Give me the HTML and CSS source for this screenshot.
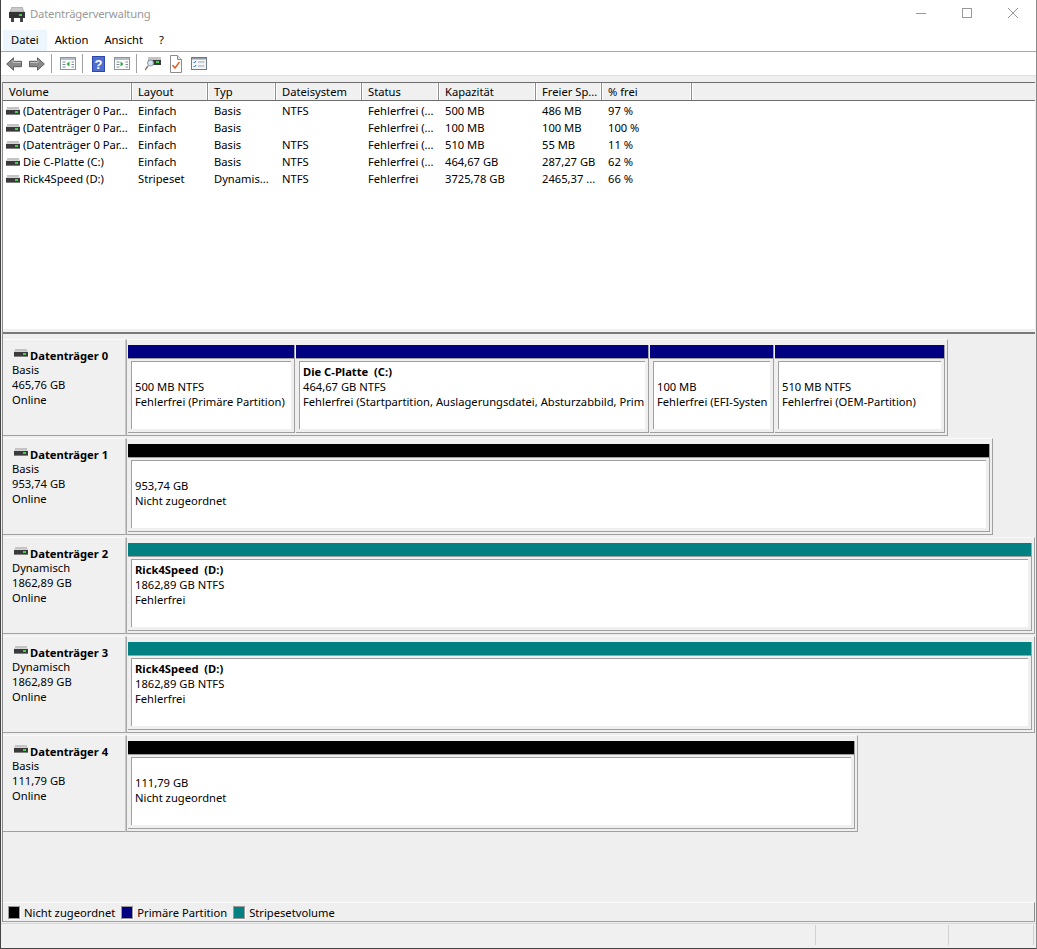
FILE: index.html
```html
<!DOCTYPE html>
<html lang="de">
<head>
<meta charset="utf-8">
<title>Datenträgerverwaltung</title>
<link rel="stylesheet" href="styles.css">
</head>
<body>
<svg class="defs" width="0" height="0">
  <symbol id="hdd" viewBox="0 0 14 8">
    <rect x="1" y="0" width="12" height="3" fill="#c4c4c4"/>
    <rect x="0" y="2" width="14" height="1" fill="#d4d4d4"/>
    <rect x="0" y="3" width="14" height="4" fill="#3a3a3a"/>
    <rect x="0" y="7" width="14" height="1" fill="#808080"/>
    <rect x="9" y="4" width="3" height="2" fill="#3fd24a"/>
  </symbol>
</svg>
<div class="window">
  <header class="titlebar">
    <svg class="appicon" width="16" height="15" viewBox="0 0 16 15">
      <path d="M3 0h10l2 5H1z" fill="#c9c9c9" stroke="#777" stroke-width=".5"/>
      <rect x="0" y="5" width="16" height="6" fill="#333"/>
      <rect x="10" y="7" width="3" height="2" fill="#3fd24a"/>
      <rect x="2" y="11" width="3" height="4" fill="#444"/>
      <rect x="11" y="11" width="3" height="4" fill="#444"/>
    </svg>
    <span class="apptitle">Datenträgerverwaltung</span>
    <div class="caption">
      <svg class="capbtn" width="46" height="30" viewBox="0 0 46 30"><path d="M18 13.5h10" stroke="#999" stroke-width="1"/></svg>
      <svg class="capbtn" width="46" height="30" viewBox="0 0 46 30"><rect x="18.5" y="8.5" width="9" height="9" fill="none" stroke="#999"/></svg>
      <svg class="capbtn" width="46" height="30" viewBox="0 0 46 30"><path d="M18 8l10 10M28 8L18 18" stroke="#999" stroke-width="1" fill="none"/></svg>
    </div>
  </header>
  <nav class="menubar">
    <span class="menu menu-active">Datei</span>
    <span class="menu">Aktion</span>
    <span class="menu">Ansicht</span>
    <span class="menu">?</span>
  </nav>
  <div class="toolbar">
    <svg class="tool tool-arrow" width="16" height="14" viewBox="0 0 16 14"><path d="M7.500.8L.7 7l6.800 6.200V9.700h8V4.300h-8z" fill="#8a8a8a" stroke="#5e5e5e"/><path d="M7 3v2.500h8" fill="none" stroke="#c2c2c2"/></svg>
    <svg class="tool tool-arrow2" width="16" height="14" viewBox="0 0 16 14"><path d="M8.500.8L15.300 7l-6.800 6.200V9.700h-8V4.300h8z" fill="#8a8a8a" stroke="#5e5e5e"/><path d="M1 5.500h8V3" fill="none" stroke="#c2c2c2"/></svg>
    <i class="tsep tsep-1"></i>
    <svg class="tool tool-panel" width="16" height="13" viewBox="0 0 16 13"><rect x=".5" y=".5" width="15" height="12" fill="#fff" stroke="#8b95a0"/><rect x="1" y="1" width="14" height="2" fill="#b4bdc7"/><path d="M2.500 5h3M2.500 7.500h3M2.500 10h3M11.500 5h2.500M11.500 7.500h2.500M11.500 10h2.500" stroke="#7d8996"/><path d="M9.500 4.500v5L6.500 7z" fill="#2fa83a"/></svg>
    <i class="tsep tsep-2"></i>
    <svg class="tool tool-help" width="13" height="16" viewBox="0 0 13 16"><rect width="13" height="16" fill="#2d46a8"/><rect x="1" y="1" width="11" height="14" fill="#4e6fd0"/><text class="helpq" x="6.500" y="13">?</text></svg>
    <svg class="tool tool-panel2" width="16" height="13" viewBox="0 0 16 13"><rect x=".5" y=".5" width="15" height="12" fill="#fff" stroke="#8b95a0"/><rect x="1" y="1" width="14" height="2" fill="#b4bdc7"/><path d="M2.500 5h3M2.500 7.500h3M2.500 10h3M11.500 5h2.500M11.500 7.500h2.500M11.500 10h2.500" stroke="#7d8996"/><path d="M6.500 4.500v5L9.500 7z" fill="#2fa83a"/></svg>
    <i class="tsep tsep-3"></i>
    <svg class="tool tool-scan" width="16" height="15" viewBox="0 0 16 15"><rect x="3" y="1" width="13" height="3" fill="#c4c4c4"/><rect x="3" y="4" width="13" height="5" fill="#3a3a3a"/><rect x="11" y="5" width="3" height="2" fill="#3fd24a"/><circle cx="5.500" cy="7" r="3" fill="#d5e6f0" stroke="#8a98a4"/><path d="M3 10l-3 4" stroke="#8a7a66" stroke-width="1.500"/></svg>
    <svg class="tool tool-doc" width="12" height="18" viewBox="0 0 12 18"><path d="M.5.500h7l4 4v13H.5z" fill="#fff" stroke="#8c8c8c"/><path d="M7.500.5v4h4" fill="#e4e4e4" stroke="#8c8c8c"/><path d="M2.500 10l2.500 3 4.500-6" fill="none" stroke="#e0622a" stroke-width="1.500"/></svg>
    <svg class="tool tool-list" width="16" height="13" viewBox="0 0 16 13"><rect x=".5" y=".5" width="15" height="12" fill="#f4f6f8" stroke="#6f7c8a"/><rect x="1" y="1" width="14" height="1.500" fill="#8f9ba8"/><path d="M2.500 5l1 1 1.500-2M2.500 9l1 1 1.500-2" fill="none" stroke="#2b74c8"/><path d="M7 5h6.500M7 9h6.500" stroke="#9aa5b0"/></svg>
  </div>

  <main class="client">
    <section class="listview">
      <div class="row head">
        <span class="c c1">Volume</span><span class="c c2">Layout</span><span class="c c3">Typ</span><span class="c c4">Dateisystem</span><span class="c c5">Status</span><span class="c c6">Kapazität</span><span class="c c7">Freier Sp...</span><span class="c c8">% frei</span><span class="c c9"></span>
      </div>
      <div class="rows">
        <div class="row"><span class="c c1"><svg class="hdd"><use href="#hdd"/></svg>(Datenträger 0 Par...</span><span class="c c2">Einfach</span><span class="c c3">Basis</span><span class="c c4">NTFS</span><span class="c c5">Fehlerfrei (...</span><span class="c c6">500 MB</span><span class="c c7">486 MB</span><span class="c c8">97 %</span></div>
        <div class="row"><span class="c c1"><svg class="hdd"><use href="#hdd"/></svg>(Datenträger 0 Par...</span><span class="c c2">Einfach</span><span class="c c3">Basis</span><span class="c c4"></span><span class="c c5">Fehlerfrei (...</span><span class="c c6">100 MB</span><span class="c c7">100 MB</span><span class="c c8">100 %</span></div>
        <div class="row"><span class="c c1"><svg class="hdd"><use href="#hdd"/></svg>(Datenträger 0 Par...</span><span class="c c2">Einfach</span><span class="c c3">Basis</span><span class="c c4">NTFS</span><span class="c c5">Fehlerfrei (...</span><span class="c c6">510 MB</span><span class="c c7">55 MB</span><span class="c c8">11 %</span></div>
        <div class="row"><span class="c c1"><svg class="hdd"><use href="#hdd"/></svg>Die C-Platte (C:)</span><span class="c c2">Einfach</span><span class="c c3">Basis</span><span class="c c4">NTFS</span><span class="c c5">Fehlerfrei (...</span><span class="c c6">464,67 GB</span><span class="c c7">287,27 GB</span><span class="c c8">62 %</span></div>
        <div class="row"><span class="c c1"><svg class="hdd"><use href="#hdd"/></svg>Rick4Speed (D:)</span><span class="c c2">Stripeset</span><span class="c c3">Dynamis...</span><span class="c c4">NTFS</span><span class="c c5">Fehlerfrei</span><span class="c c6">3725,78 GB</span><span class="c c7">2465,37 ...</span><span class="c c8">66 %</span></div>
      </div>
    </section>

    <section class="disks">
      <article class="disk">
        <div class="label"><div class="dname"><svg class="hdd"><use href="#hdd"/></svg><b>Datenträger 0</b></div><div>Basis</div><div>465,76 GB</div><div>Online</div></div>
        <div class="vol">
          <div class="part w167"><div class="bar navy"></div><div class="sunken"><div class="blank"></div><div>500 MB NTFS</div><div>Fehlerfrei (Primäre Partition)</div></div></div>
          <div class="part w353"><div class="bar navy"></div><div class="sunken"><div><b>Die C-Platte&nbsp; (C:)</b></div><div>464,67 GB NTFS</div><div>Fehlerfrei (Startpartition, Auslagerungsdatei, Absturzabbild, Prim</div></div></div>
          <div class="part w124"><div class="bar navy"></div><div class="sunken"><div class="blank"></div><div>100 MB</div><div>Fehlerfrei (EFI-Systen</div></div></div>
          <div class="part w170"><div class="bar navy"></div><div class="sunken"><div class="blank"></div><div>510 MB NTFS</div><div>Fehlerfrei (OEM-Partition)</div></div></div>
        </div>
      </article>
      <article class="disk">
        <div class="label"><div class="dname"><svg class="hdd"><use href="#hdd"/></svg><b>Datenträger 1</b></div><div>Basis</div><div>953,74 GB</div><div>Online</div></div>
        <div class="vol">
          <div class="part w862"><div class="bar black"></div><div class="sunken"><div class="blank"></div><div>953,74 GB</div><div>Nicht zugeordnet</div></div></div>
        </div>
      </article>
      <article class="disk">
        <div class="label"><div class="dname"><svg class="hdd"><use href="#hdd"/></svg><b>Datenträger 2</b></div><div>Dynamisch</div><div>1862,89 GB</div><div>Online</div></div>
        <div class="vol">
          <div class="part w904"><div class="bar teal"></div><div class="sunken"><div><b>Rick4Speed&nbsp; (D:)</b></div><div>1862,89 GB NTFS</div><div>Fehlerfrei</div></div></div>
        </div>
      </article>
      <article class="disk">
        <div class="label"><div class="dname"><svg class="hdd"><use href="#hdd"/></svg><b>Datenträger 3</b></div><div>Dynamisch</div><div>1862,89 GB</div><div>Online</div></div>
        <div class="vol">
          <div class="part w904"><div class="bar teal"></div><div class="sunken"><div><b>Rick4Speed&nbsp; (D:)</b></div><div>1862,89 GB NTFS</div><div>Fehlerfrei</div></div></div>
        </div>
      </article>
      <article class="disk">
        <div class="label"><div class="dname"><svg class="hdd"><use href="#hdd"/></svg><b>Datenträger 4</b></div><div>Basis</div><div>111,79 GB</div><div>Online</div></div>
        <div class="vol">
          <div class="part w727"><div class="bar black"></div><div class="sunken"><div class="blank"></div><div>111,79 GB</div><div>Nicht zugeordnet</div></div></div>
        </div>
      </article>
    </section>

    <footer class="legend">
      <i class="swatch black"></i><span>Nicht zugeordnet</span>
      <i class="swatch navy"></i><span>Primäre Partition</span>
      <i class="swatch teal"></i><span>Stripesetvolume</span>
    </footer>
  </main>

  <div class="statusbar"><i class="sb sb1"></i><i class="sb sb2"></i><i class="sb sb3"></i></div>
</div>
</body>
</html>
```
FILE: styles.css
```css
* { box-sizing: border-box; }
html, body { margin: 0; padding: 0; }
body {
  width: 1037px;
  height: 949px;
  overflow: hidden;
  font-family: "Noto Sans", "Open Sans", sans-serif;
  font-size: 11.2px;
  line-height: 15px;
  color: #000;
  background: #f0f0f0;
}
.defs { position: absolute; }
b { font-weight: 700; }
.window {
  width: 1037px;
  height: 949px;
  display: flex;
  flex-direction: column;
  border-left: 1px solid #444;
  border-right: 1px solid #8a8a8a;
  border-bottom: 1px solid #444;
}

/* title bar */
.titlebar {
  height: 30px;
  background: #fff;
  display: flex;
  align-items: center;
  padding-left: 8px;
  flex: none;
}
.appicon { margin-top: -2px; }
.apptitle {
  margin-left: 5px;
  margin-top: -4px;
  font-size: 11.3px;
  letter-spacing: -.2px;
  color: #999;
}
.caption { margin-left: auto; display: flex; align-self: flex-start; }
.capbtn { display: block; }

/* menu */
.menubar {
  height: 22px;
  background: #fff;
  border-bottom: 1px solid #a8a8a8;
  display: flex;
  padding-left: 2px;
  flex: none;
}
.menu {
  display: block;
  height: 21px;
  line-height: 20px;
  padding: 0 8px;
}
.menu-active { background: #eef6fd; }

/* toolbar */
.toolbar {
  height: 24px;
  background: #fff;
  border-bottom: 1px solid #e0e0e0;
  display: flex;
  align-items: center;
  flex: none;
}
.tool { display: block; flex: none; }
.tsep { display: block; width: 1px; height: 19px; background: #a0a0a0; flex: none; }
.tool-arrow { margin-left: 5px; }
.tool-arrow2 { margin-left: 7px; }
.tsep-1 { margin-left: 6px; }
.tool-panel { margin-left: 8px; }
.tsep-2 { margin-left: 6px; }
.tool-help { margin-left: 9px; }
.tool-panel2 { margin-left: 9px; }
.tsep-3 { margin-left: 6px; }
.tool-scan { margin-left: 8px; }
.tool-doc { margin-left: 9px; }
.tool-list { margin-left: 9px; }
.helpq { font: 700 13px "Liberation Sans", sans-serif; fill: #fff; text-anchor: middle; }

/* client */
.client {
  flex: 1;
  min-height: 0;
  display: flex;
  flex-direction: column;
  padding-top: 6px;
  padding-left: 2px;
  background: linear-gradient(#8a8a8a, #8a8a8a) 1px 6px / 1px 100% no-repeat #efefef;
}

/* list */
.listview {
  height: 252px;
  flex: none;
  border-top: 1px solid #6d6d6d;
  border-bottom: 2px solid #7a7a7a;
  background: #fff;
  margin-right: 1px;
  padding-bottom: 3px;
  box-shadow: inset 0 -3px 0 #f0f0f0;
}
.row { display: flex; height: 17px; line-height: 17px; white-space: nowrap; }
.head {
  height: 18px;
  background: #f0f0f0;
  border-bottom: 1px solid #6d6d6d;
}
.head .c {
  border-right: 1px solid #8d8d8d;
  box-shadow: inset -1px 0 0 #fff, 1px 0 0 #fff;
  padding-left: 6px;
}
.head .c9 { border-right: 0; box-shadow: none; flex: 1; }
.rows { padding-top: 1px; }
.c { display: block; flex: none; overflow: hidden; padding-left: 6px; }
.c1 { width: 129px; display: flex; align-items: center; }
.c2 { width: 76px; }
.c3 { width: 68px; }
.c4 { width: 86px; }
.c5 { width: 77px; }
.c6 { width: 97px; }
.c7 { width: 66px; }
.c8 { width: 90px; }
.rows .c1 { padding-left: 3px; }
.hdd { width: 14px; height: 8px; flex: none; margin-right: 3px; }

/* disks */
.disks {
  flex: none;
  padding-top: 4px;
  display: flex;
  flex-direction: column;
}
.disk { display: flex; height: 99px; flex: none; padding-top: 1px; }
.label {
  width: 123px;
  height: 97px;
  padding: 8px 0 0 9px;
  flex: none;
  border-top: 1px solid #fafafa;
  border-right: 1px solid #c8c8c8;
  border-bottom: 1px solid #a0a0a0;
  background: #f0f0f0;
}
.dname { display: flex; align-items: center; padding-left: 2px; height: 14px; }
.dname .hdd { margin-top: -5px; margin-right: 2px; }
.vol {
  display: flex;
  gap: 1px;
  height: 97px;
  flex: none;
  padding: 5px 2px 2px 1px;
  border-top: 1px solid #fafafa;
  border-left: 1px solid #a8a8a8;
  border-right: 1px solid #a0a0a0;
  border-bottom: 1px solid #a0a0a0;
}
.part {
  height: 88px;
  flex: none;
  border-right: 1px solid #a0a0a0;
  border-bottom: 1px solid #a0a0a0;
}
.w167 { width: 167px; }
.w353 { width: 353px; }
.w124 { width: 124px; }
.w170 { width: 170px; }
.w862 { width: 862px; }
.w904 { width: 904px; }
.w727 { width: 727px; }
.bar { height: 14px; border-bottom: 1px solid #a0a0a0; }
.navy { background-color: #000080; }
.black { background-color: #000; }
.teal { background-color: #008080; }
.sunken {
  height: 68px;
  margin: 2px 3px 0 3px;
  padding: 2px 0 0 3px;
  background: #fff;
  border-top: 1px solid #a0a0a0;
  border-left: 1px solid #a0a0a0;
  overflow: hidden;
  white-space: nowrap;
}
.blank { height: 15px; }

/* legend */
.legend {
  margin-top: auto;
  height: 20px;
  flex: none;
  display: flex;
  align-items: center;
  padding-left: 5px;
  margin-right: 1px;
  border-top: 1px solid #fafafa;
  border-right: 1px solid #8d8d8d;
  border-bottom: 1px solid #a0a0a0;
  white-space: nowrap;
}
.swatch {
  display: block;
  width: 12px;
  height: 13px;
  border: 1px solid #9a9a9a;
  box-shadow: 1px 1px 0 #fff;
  margin-right: 4px;
  flex: none;
}
.legend span { margin-right: 6px; }

/* status */
.statusbar {
  height: 25px;
  flex: none;
  margin-top: 1px;
  background: #f0f0f0;
  border-top: 1px solid #d8d8d8;
  display: flex;
  justify-content: flex-end;
  padding-top: 1px;
  padding-right: 2px;
}
.sb { display: block; width: 1px; height: 20px; background: #d0d0d0; }
.sb1 { margin-right: 132px; }
.sb2 { margin-right: 84px; }
```
